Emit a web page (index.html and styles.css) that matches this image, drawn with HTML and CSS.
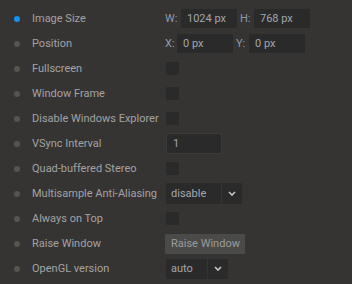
FILE: index.html
```html
<!DOCTYPE html>
<html lang="en">
<head>
    <meta charset="UTF-8">
    <title>Window Settings</title>
    <link rel="stylesheet" href="styles.css">
</head>
<body>
    <div class="settings">
        <div class="row">
            <span class="dot active"></span>
            <span class="label">Image Size</span>
            <div class="control">
                <span class="axis">W:</span>
                <input class="field" type="text" value="1024 px">
                <span class="axis gap">H:</span>
                <input class="field" type="text" value="768 px">
            </div>
        </div>
        <div class="row">
            <span class="dot"></span>
            <span class="label">Position</span>
            <div class="control">
                <span class="axis x">X:</span>
                <input class="field" type="text" value="0 px">
                <span class="axis gap y">Y:</span>
                <input class="field" type="text" value="0 px">
            </div>
        </div>
        <div class="row">
            <span class="dot"></span>
            <span class="label">Fullscreen</span>
            <div class="control"><span class="check"></span></div>
        </div>
        <div class="row">
            <span class="dot"></span>
            <span class="label">Window Frame</span>
            <div class="control"><span class="check"></span></div>
        </div>
        <div class="row">
            <span class="dot"></span>
            <span class="label">Disable Windows Explorer</span>
            <div class="control"><span class="check"></span></div>
        </div>
        <div class="row">
            <span class="dot"></span>
            <span class="label">VSync Interval</span>
            <div class="control"><input class="field wide" type="text" value="1"></div>
        </div>
        <div class="row">
            <span class="dot"></span>
            <span class="label">Quad-buffered Stereo</span>
            <div class="control"><span class="check"></span></div>
        </div>
        <div class="row">
            <span class="dot"></span>
            <span class="label">Multisample Anti-Aliasing</span>
            <div class="control">
                <div class="select">
                    <span class="value v-disable">disable</span>
                    <span class="arrow"><svg width="8" height="5" viewBox="0 0 8 5"><path d="M1 1 L4 4 L7 1" fill="none" stroke="#c8c8c8" stroke-width="1.6"/></svg></span>
                </div>
            </div>
        </div>
        <div class="row">
            <span class="dot"></span>
            <span class="label">Always on Top</span>
            <div class="control"><span class="check"></span></div>
        </div>
        <div class="row">
            <span class="dot"></span>
            <span class="label">Raise Window</span>
            <div class="control"><button class="btn">Raise Window</button></div>
        </div>
        <div class="row">
            <span class="dot"></span>
            <span class="label">OpenGL version</span>
            <div class="control">
                <div class="select small">
                    <span class="value v-auto">auto</span>
                    <span class="arrow"><svg width="8" height="5" viewBox="0 0 8 5"><path d="M1 1 L4 4 L7 1" fill="none" stroke="#c8c8c8" stroke-width="1.6"/></svg></span>
                </div>
            </div>
        </div>
    </div>
</body>
</html>
```

FILE: styles.css
```css
* {
    margin: 0;
    padding: 0;
    box-sizing: border-box;
}

body {
    background: #353433;
    font-family: Roboto, "Liberation Sans", sans-serif;
    font-size: 11px;
    color: #a3a3a3;
}

.settings {
    padding-top: 6px;
}

.row {
    display: flex;
    align-items: center;
    height: 25px;
    padding-left: 14px;
}

.dot {
    width: 6px;
    height: 6px;
    border-radius: 50%;
    background: #545454;
    margin-right: 12px;
}

.dot.active {
    background: #1591f0;
}

.label {
    width: 133px;
    white-space: nowrap;
}

.control {
    display: flex;
    align-items: center;
}

.axis {
    color: #8d9aa8;
    width: 16px;
}

.axis.gap {
    margin-left: 3px;
    width: 14px;
}

.axis.x {
    width: 12px;
}

.axis.y {
    width: 13px;
}

.field {
    width: 56px;
    height: 19px;
    background: #2a2a2b;
    border: none;
    outline: none;
    color: #a2a6ac;
    font-family: inherit;
    font-size: 11px;
    padding-left: 6px;
}

.field.wide {
    height: 21px;
    margin-left: 1px;
    border: 1px solid #3a3a3a;
}

.check {
    width: 13px;
    height: 13px;
    margin-left: 1px;
    background: #2a2a2b;
    border-radius: 1px;
}

.select {
    display: flex;
    height: 21px;
    margin-left: 1px;
}

.select.small {
    height: 20px;
}

.select .value {
    background: #2a2a2b;
    display: flex;
    align-items: center;
    padding-left: 5px;
    color: #a4a8ae;
    margin-right: 1px;
}

.v-disable {
    width: 55px;
}

.v-auto {
    width: 41px;
}

.arrow {
    width: 20px;
    background: #2a2a2b;
    display: flex;
    align-items: center;
    justify-content: center;
}

.btn {
    height: 20px;
    width: 80px;
    background: #4a4a49;
    border: none;
    color: #9c9c9c;
    font-family: inherit;
    font-size: 11px;
    text-align: left;
    padding-left: 6px;
}
```
